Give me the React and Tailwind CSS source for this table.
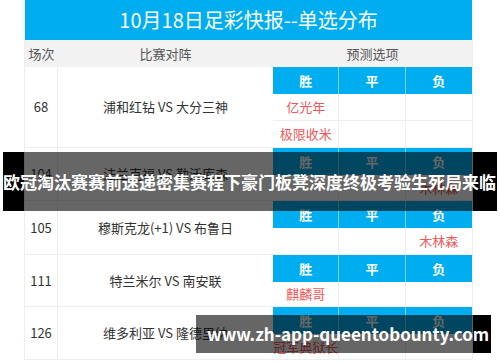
import React from 'react';

const matches = [
  { no: '68', game: '浦和红钻 VS 大分三神', h: 'h-[81px]', picks: [['亿光年', '', ''], ['极限收米', '', '']] },
  { no: '104', game: '法兰克福 VS 勒沃库森', h: 'h-[53px]', picks: [['', '', '木林森']] },
  { no: '105', game: '穆斯克龙(+1) VS 布鲁日', h: 'h-[54px]', picks: [['', '', '木林森']] },
  { no: '111', game: '特兰米尔 VS 南安联', h: 'h-[52px]', picks: [['麒麟哥', '', '']] },
  { no: '126', game: '维多利亚 VS 隆德里纳', h: 'h-[53px]', picks: [['冠军典狱长', '', '']] },
];

function PickTable({ picks }) {
  return (
    <div className="flex-1 flex flex-col">
      <div className="h-[27px] grid grid-cols-3 bg-[#00aeef] text-white font-bold">
        <div className="flex items-center justify-center border-r border-[#7fd3f3]">胜</div>
        <div className="flex items-center justify-center border-r border-[#7fd3f3]">平</div>
        <div className="flex items-center justify-center">负</div>
      </div>
      {picks.map((row, i) => (
        <div key={i} className={`flex-1 grid grid-cols-3 text-[#f25757] ${i < picks.length - 1 ? 'border-b border-[#eeeeee]' : ''}`}>
          {row.map((p, j) => (
            <div key={j} className={`flex items-center justify-center whitespace-nowrap ${j < 2 ? 'border-r border-[#eeeeee]' : ''}`}>
              {p}
            </div>
          ))}
        </div>
      ))}
    </div>
  );
}

export default function App() {
  return (
    <div className="relative w-[500px] h-[362px] bg-white overflow-hidden font-['Noto_Sans_CJK_SC',sans-serif] text-[13px]">
      {/* Table */}
      <div className="ml-[24px] w-[449px] border-x border-[#eeeeee]">
        <div className="h-[40px] bg-[#00aeef] text-white text-[20px] flex items-center justify-center">
          10月18日足彩快报--单选分布
        </div>
        <div className="h-[27px] flex bg-[#f2f2f2] text-[#555]">
          <div className="w-[33px] flex items-center justify-center">场次</div>
          <div className="w-[215px] flex items-center justify-center">比赛对阵</div>
          <div className="flex-1 flex items-center justify-center">预测选项</div>
        </div>
        {matches.map((m) => (
          <div key={m.no} className={`${m.h} flex border-b border-[#eeeeee] text-[#333]`}>
            <div className="w-[33px] flex items-center justify-center border-r border-[#eeeeee]">{m.no}</div>
            <div className="w-[215px] flex items-center justify-center">{m.game}</div>
            <PickTable picks={m.picks} />
          </div>
        ))}
      </div>

      {/* Caption overlays */}
      <div className="absolute left-[3px] top-[152px] w-[494px] h-[59px] flex">
        <div className="w-[21px] bg-black" />
        <div className="w-[449px] bg-black/60" />
        <div className="flex-1 bg-black" />
        <div className="absolute inset-0 flex items-center text-white font-bold text-[17px] whitespace-nowrap">
          欧冠淘汰赛赛前速递密集赛程下豪门板凳深度终极考验生死局来临
        </div>
      </div>
      <div className="absolute left-[196px] top-[315px] w-[295px] h-[38px] flex">
        <div className="w-[277px] bg-black/60" />
        <div className="flex-1 bg-black" />
        <div className="absolute inset-0 flex items-center pl-[11px] text-white font-bold text-[17px] whitespace-nowrap">
          www.zh-app-queentobounty.com
        </div>
      </div>
    </div>
  );
}
